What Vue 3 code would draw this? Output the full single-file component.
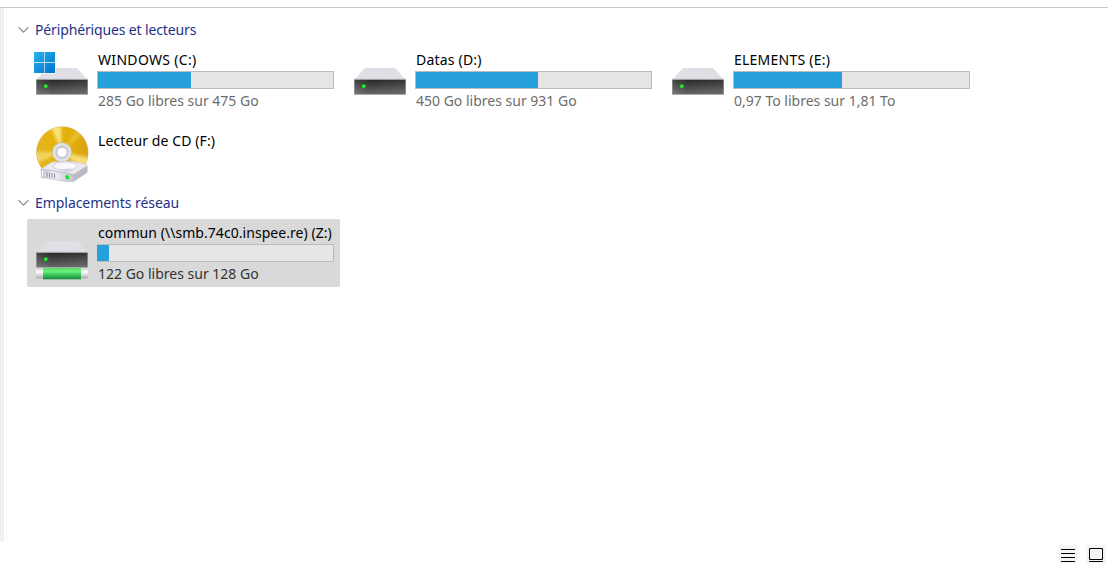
<script setup>
const groups = [
  {
    title: 'Périphériques et lecteurs',
    cls: 'devices',
    items: [
      { name: 'WINDOWS (C:)', info: '285 Go libres sur 475 Go', fill: 93, icon: 'windows', cls: 'c' },
      { name: 'Datas (D:)', info: '450 Go libres sur 931 Go', fill: 122, icon: 'drive', cls: 'd' },
      { name: 'ELEMENTS (E:)', info: '0,97 To libres sur 1,81 To', fill: 108, icon: 'drive', cls: 'e' },
      { name: 'Lecteur de CD (F:)', icon: 'cd', cls: 'f' },
    ],
  },
  {
    title: 'Emplacements réseau',
    cls: 'network',
    items: [
      { name: 'commun (\\\\smb.74c0.inspee.re) (Z:)', info: '122 Go libres sur 128 Go', fill: 12, icon: 'network', cls: 'z selected' },
    ],
  },
]
</script>

<template>
  <div class="explorer">
    <svg class="defs" width="0" height="0" aria-hidden="true">
      <defs>
        <linearGradient id="body" x1="0" y1="0" x2="0" y2="1">
          <stop offset="0" stop-color="#282828" /><stop offset="1" stop-color="#646464" />
        </linearGradient>
        <linearGradient id="shine" x1="0" y1="0" x2="1" y2="0">
          <stop offset="0" stop-color="#fff" stop-opacity=".12" /><stop offset=".3" stop-color="#fff" stop-opacity="0" />
          <stop offset="1" stop-color="#fff" stop-opacity=".06" />
        </linearGradient>
        <radialGradient id="led">
          <stop offset="0" stop-color="#9cff8c" /><stop offset=".45" stop-color="#22e62c" />
          <stop offset="1" stop-color="#109018" />
        </radialGradient>
        <linearGradient id="win" gradientUnits="userSpaceOnUse" x1="7" y1="6" x2="28" y2="27">
          <stop offset="0" stop-color="#2bb5ec" /><stop offset="1" stop-color="#0070cf" />
        </linearGradient>
        <linearGradient id="pipe" x1="0" y1="0" x2="0" y2="1">
          <stop offset="0" stop-color="#58dc68" /><stop offset=".3" stop-color="#6bef79" />
          <stop offset=".65" stop-color="#35bf55" /><stop offset="1" stop-color="#158b40" />
        </linearGradient>
        <linearGradient id="cap" x1="0" y1="0" x2="0" y2="1">
          <stop offset="0" stop-color="#d5d5d5" /><stop offset=".35" stop-color="#fff" />
          <stop offset="1" stop-color="#a9a9a9" />
        </linearGradient>
        <linearGradient id="gold" x1="0" y1="0" x2="1" y2="0">
          <stop offset="0" stop-color="#e3b428" /><stop offset=".3" stop-color="#e6b40c" />
          <stop offset=".7" stop-color="#e2ad05" /><stop offset="1" stop-color="#d9a31a" />
        </linearGradient>
        <filter id="soft" x="-20%" y="-20%" width="140%" height="140%"><feGaussianBlur stdDeviation="1.6" /></filter>
        <clipPath id="disc"><circle cx="35.3" cy="32.5" r="25.6" /></clipPath>
        <linearGradient id="front" x1="0" y1="0" x2="1" y2="0">
          <stop offset="0" stop-color="#c4c5d0" /><stop offset=".35" stop-color="#f0f0f6" />
          <stop offset="1" stop-color="#c2c3ce" />
        </linearGradient>
      </defs>
    </svg>

    <main class="pane">
      <section v-for="g in groups" :key="g.title" :class="['group', g.cls]">
        <h2>
          <svg width="12" height="8" viewBox="0 0 12 8"><path d="M.6 1.2 5.500 6.100 10.400 1.200" fill="none" stroke="#858585" stroke-width="1.1" /></svg>
          <span class="heading">{{ g.title }}</span>
        </h2>
        <div class="tiles">
          <article v-for="item in g.items" :key="item.name" :class="['tile', item.cls]">
            <svg v-if="item.icon !== 'cd'" class="icon" width="70" height="68" viewBox="0 0 70 68">
              <path d="M20 22H50L61 34H9Z" fill="#dfe0e5" />
              <path d="M9 33.2H61" stroke="#c9cad0" stroke-width="1" />
              <rect x="9" y="33.5" width="52" height="15.5" rx=".8" fill="#aaa" />
              <rect x="9.6" y="33.8" width="50.8" height="14.2" fill="url(#body)" />
              <rect x="9.6" y="33.8" width="50.8" height="14.2" fill="url(#shine)" />
              <circle cx="18.8" cy="40.2" r="2.3" fill="url(#led)" />
              <g v-if="item.icon === 'windows'">
                <path d="M6 5H29V28H6Z" fill="#fff" fill-opacity=".6" />
                <path d="M7 6H17.200V16.200H7ZM17.800 6H28V16.200H17.800ZM7 17H17.200V27H7ZM17.800 17H28V27H17.800Z" fill="url(#win)" />
              </g>
              <g v-if="item.icon === 'network'">
                <rect x="9" y="49.5" width="52" height="10" rx="1.5" fill="url(#cap)" />
                <rect x="16" y="49" width="38" height="11.3" fill="url(#pipe)" />
              </g>
            </svg>
            <svg v-else class="icon" width="70" height="68" viewBox="0 0 70 68">
              <circle cx="35.3" cy="32.5" r="25.8" fill="url(#gold)" stroke="#cfa23a" stroke-width=".5" />
              <g clip-path="url(#disc)">
                <g filter="url(#soft)" fill="#fff3a0">
                  <path d="M35 32 23 5 34 3Z" fill-opacity=".75" />
                  <path d="M35 32 64 38 60 52Z" fill-opacity=".7" />
                  <path d="M35 32 5 32 8 44Z" fill-opacity=".5" />
                  <path d="M35 32 52 6 58 12Z" fill-opacity=".25" />
                </g>
              </g>
              <circle cx="35" cy="32.300" r="9.800" fill="#e3e4e8" stroke="#c5b783" stroke-width=".8" />
              <circle cx="35" cy="32.300" r="7.300" fill="#d4d5da" />
              <circle cx="35" cy="32.300" r="5.200" fill="#fff" stroke="#b5b6bc" stroke-width=".9" />
              <path d="M14 49 24 42.500Q25 42 27 41.800L46 41.200 60.500 45 47 54.500Z" fill="#e9e9f1" stroke="#c6c7d2" stroke-width=".5" />
              <ellipse cx="38" cy="46" rx="12" ry="4.200" fill="#f8f8fc" stroke="#c4c5d2" stroke-width=".8" />
              <path d="M31 49.500 43 48.500 47 51 38 52.500Z" fill="#d3d4de" />
              <path d="M14 49 47 54.500V61.500H39L14.500 57.500Z" fill="url(#front)" stroke="#b5b6c2" stroke-width=".6" />
              <path d="M47 54.500 60.500 45.500V52.500L47 61.500Z" fill="#b9bac8" />
              <path d="M20 52V57M22.500 52.500V57.500M25 53V58M27.500 53.500V58.500" stroke="#8b8c9c" stroke-width="1" />
              <path d="M15.500 50.500V56.500M31 54V59.500" stroke="#fff" stroke-width="1" />
              <rect x="38.600" y="55.200" width="3.200" height="4" rx="1" fill="#17da24" />
            </svg>
            <div class="text">
              <div class="name"><span>{{ item.name }}</span></div>
              <template v-if="item.info">
                <div class="bar"><div class="fill" :style="{ width: item.fill + 'px' }"></div></div>
                <div class="info"><span>{{ item.info }}</span></div>
              </template>
            </div>
          </article>
        </div>
      </section>
    </main>

    <footer class="views">
      <span class="view">
        <svg width="20" height="18" viewBox="0 0 20 18"><path d="M3 4.500H17M3 8.500H17M3 12.500H17M3 16.500H17" stroke="#000" /></svg>
      </span>
      <span class="view">
        <svg width="20" height="18" viewBox="0 0 20 18"><path d="M3.500 3.500H16.500V14.500H3.500ZM3 16.500H17" fill="none" stroke="#000" /></svg>
      </span>
    </footer>
  </div>
</template>

<style>
body { margin: 0; background: #fff; overflow: hidden; }
</style>

<style scoped>
.explorer {
  display: flex;
  flex-direction: column;
  box-sizing: border-box;
  width: 1108px;
  height: 563px;
  padding-top: 7px;
  overflow: hidden;
  background: #fff;
  font-family: "Noto Sans", "Open Sans", sans-serif;
  font-size: 14px;
  line-height: 20px;
  color: #000;
}
.defs { position: absolute; }
.pane {
  box-sizing: border-box;
  height: 534px;
  border-top: 1px solid #c8c8c8;
  padding: 12px 0 0 18px;
  background: linear-gradient(to right, #f0f0f0 4px, #fff 4px, #fff 6px, #f5f5f5 6px, #f5f5f5 7px, #fff 7px);
}
.group { height: 173px; }
h2 {
  display: flex;
  align-items: center;
  gap: 5px;
  height: 20px;
  margin: 0 0 6px;
  font-size: inherit;
  font-weight: 400;
  color: #1e3287;
}
.devices .heading { letter-spacing: -0.14px; }
.network .heading { letter-spacing: -0.05px; }
.tiles {
  display: grid;
  grid-template-columns: repeat(3, 313px);
  gap: 5px;
  padding-left: 9px;
}
.tile { display: flex; width: 313px; height: 68px; border-radius: 2px; }
.f { position: relative; top: 1px; }
.selected { background: #d9d9d9; }
.icon { flex: none; }
.text { width: 237px; }
.name, .info { height: 20px; padding-left: 1px; white-space: nowrap; }
.name { padding-top: 4px; height: 21px; }
.c .name { letter-spacing: 0.32px; }
.d .name { letter-spacing: 0.2px; }
.e .name { letter-spacing: 0.24px; }
.f .name { padding-top: 11px; letter-spacing: 0.1px; }
.z .name { letter-spacing: 0.05px; }
.bar {
  box-sizing: border-box;
  width: 237px;
  height: 18px;
  border: 1px solid #bcbcbc;
  background: #e6e6e6;
}
.z .bar { border-left: 0; }
.fill { height: 16px; background: #26a0da; }
.info { padding-top: 2px; color: #6d6d6d; }
.selected .info { color: #333; }
.views { display: flex; justify-content: flex-end; gap: 8px; padding: 4px 2px 0 0; }
.view { display: flex; width: 20px; height: 18px; background: #f5f5f5; border-radius: 2px 2px 0 0; }
</style>
